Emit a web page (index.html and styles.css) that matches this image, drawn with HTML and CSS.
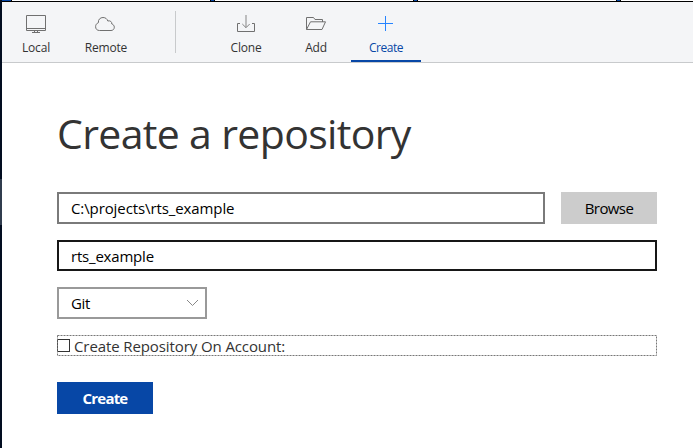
FILE: index.html
```html
<!DOCTYPE html>
<html lang="en">
<head>
<meta charset="utf-8">
<title>Create a repository</title>
<link rel="stylesheet" href="styles.css">
</head>
<body>
<div class="edge"></div>
<div class="window">
  <div class="tabstrip"></div>
  <nav class="toolbar">
    <a class="tool first"><svg width="24" height="24" viewBox="0 0 24 24"><path d="M2.5 3.5h19v15h-19zM2.5 16.5h19M10.5 18.5v2M13.5 18.5v2M8 20.5h8"/></svg><span>Local</span></a>
    <a class="tool"><svg width="24" height="24" viewBox="0 0 24 24"><path d="M5.5 18.500C3 18.500 1.600 16.900 1.600 14.700C1.600 12.700 2.700 11.300 4.400 10.700C4 7.500 6.300 5.500 9 5.500C11.600 5.500 13.200 7 13.800 9C16.200 8.300 18 9.800 17.800 12C19.400 12.400 20.300 13.700 20.300 15.200C20.300 17.200 18.900 18.500 17 18.500Z"/></svg><span>Remote</span></a>
    <div class="divider"></div>
    <a class="tool"><svg width="24" height="24" viewBox="0 0 24 24"><path d="M6 11.500H3.500v8h17v-8H18"/><path class="thin" d="M12 3v12.500M8.300 12l3.700 3.700 3.700-3.700"/></svg><span>Clone</span></a>
    <a class="tool"><svg width="24" height="24" viewBox="0 0 24 24"><path d="M2.500 17.500v-12h7l1.500 2h7.500v2.500M2.500 17.500l4-7.700h15l-3.500 7.700z"/></svg><span>Add</span></a>
    <a class="tool active"><svg width="24" height="24" viewBox="0 0 24 24"><path d="M11.500 4v15M4 11.500h15"/></svg><span>Create</span></a>
  </nav>
  <main class="page">
    <h1><span>Create a repository</span></h1>
    <div class="row">
      <div class="field path"><span>C:\projects\rts_example</span></div>
      <div class="browse"><span>Browse</span></div>
    </div>
    <div class="field name"><span>rts_example</span></div>
    <div class="field select"><span>Git</span><svg width="14" height="8" viewBox="0 0 14 8"><path d="M1 1l5.500 5.500L12 1"/></svg></div>
    <div class="account">
      <svg class="focus" width="600" height="21"><rect x=".5" y=".5" width="599" height="20"/></svg>
      <i class="box"></i><span>Create Repository On Account:</span>
    </div>
    <div class="submit"><span>Create</span></div>
  </main>
</div>
</body>
</html>
```
FILE: styles.css
```css
* { box-sizing: border-box; }
body {
  margin: 0;
  width: 693px;
  height: 448px;
  overflow: hidden;
  display: flex;
  background: #fff;
  font: 15px/20px "Open Sans", "Noto Sans", sans-serif;
  letter-spacing: -.1px;
  color: #000;
}
span { white-space: nowrap; }
.edge {
  flex: 0 0 2px;
  background: linear-gradient(#020d20 0 179px, #303c4d 179px 225px, #020d20 225px);
}
.window { flex: 1; }
.tabstrip {
  height: 2px;
  border-bottom: 1px solid #000;
  background: linear-gradient(90deg, #0747a6 0 9px, #000 9px 10px, #fff 10px 208px, #000 208px 209px, #0747a6 209px 212px, #000 212px 213px, #fff 213px 411px, #000 411px 412px, #0747a6 412px 415px, #000 415px 416px, #fff 416px 614px, #000 614px 615px, #0747a6 615px 618px, #000 618px 619px, #fff 619px);
}
.toolbar {
  height: 61px;
  display: flex;
  background: #f4f5f7;
  border-bottom: 1px solid #c8cacc;
}
.tool {
  width: 70px;
  height: 60px;
  padding-top: 10px;
  display: flex;
  flex-direction: column;
  align-items: center;
  font-size: 12px;
  line-height: 16px;
  letter-spacing: -.2px;
  color: #333;
}
.tool.first { width: 68px; margin-right: 1px; }
.tool svg { display: block; margin-bottom: 4px; }
.tool path { fill: none; stroke: #707070; stroke-width: 1; }
.tool .thin { stroke: #858585; }
.tool.active { color: #0747a6; border-bottom: 2px solid #0747a6; letter-spacing: -.5px; }
.tool.active path { stroke: #2684ff; }
.divider { width: 1px; height: 42px; margin: 9px 35px 0 34px; background: #c8cacc; }
.page { padding: 45px 0 0 55px; width: 655px; }
h1 {
  margin: 0;
  height: 84px;
  font-size: 41px;
  line-height: 50px;
  font-weight: 400;
  color: #333;
  letter-spacing: -.65px;
}
.row { display: flex; gap: 16px; }
.field {
  height: 32px;
  display: flex;
  align-items: center;
  padding: 0 12px;
  border: 2px solid #7a7a7a;
}
.path { width: 488px; }
.browse {
  width: 96px;
  height: 32px;
  display: flex;
  align-items: center;
  justify-content: center;
  background: #ccc;
  letter-spacing: -.6px;
}
.name { height: 31px; margin-top: 16px; border-color: #171717; letter-spacing: -.2px; }
.select { width: 150px; margin-top: 16px; border-color: #999; justify-content: space-between; padding-right: 5px; }
.select span { letter-spacing: -.3px; }
.select path { fill: none; stroke: #888; }
.account {
  position: relative;
  height: 21px;
  margin-top: 16px;
  display: flex;
  align-items: center;
  color: #333;
}
.focus { position: absolute; left: 0; top: 0; }
.focus rect { fill: none; stroke: #777; stroke-dasharray: 2 1; }
.box { width: 13px; height: 13px; margin-right: 4px; border: 1px solid #333; }
.submit {
  width: 96px;
  height: 32px;
  margin-top: 26px;
  display: flex;
  align-items: center;
  justify-content: center;
  background: #0747a6;
  color: #fff;
  font-weight: 700;
  letter-spacing: -.8px;
}
```
